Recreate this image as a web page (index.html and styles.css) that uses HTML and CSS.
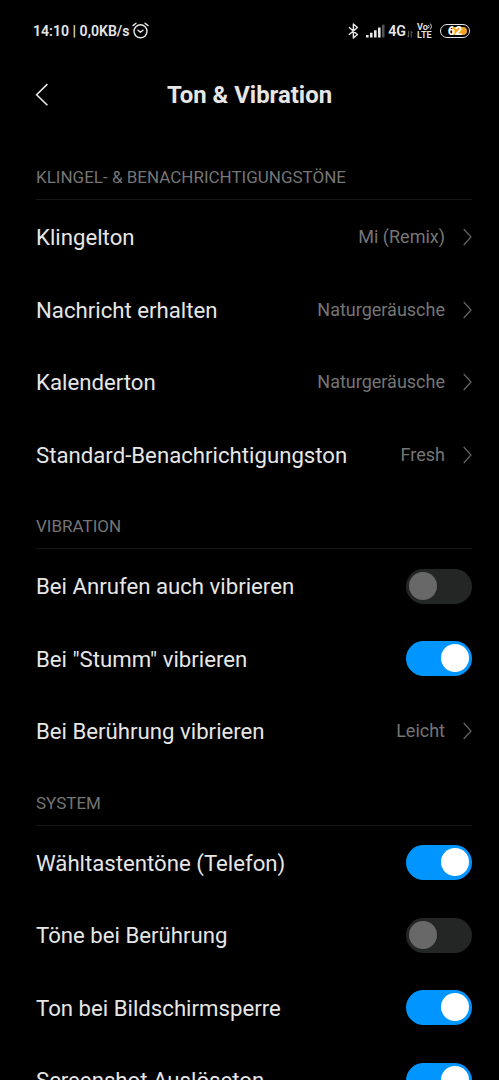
FILE: index.html
```html
<!DOCTYPE html>
<html lang="de">
<head>
<meta charset="utf-8">
<title>Ton &amp; Vibration</title>
<link rel="stylesheet" href="styles.css">
</head>
<body>
<div class="screen">
  <div class="status">
    <span class="status-time">14:10 | 0,0KB/s</span>
    <svg class="alarm" width="17" height="17" viewBox="0 0 17 17" fill="none" stroke="#e6e6e6" stroke-width="1.4" stroke-linecap="round" stroke-linejoin="round"><circle cx="8.5" cy="9.3" r="6.5"/><path d="M1 3.6 4 1.2M16 3.6 13 1.2M6 8.3l2.4 2 2.6-2"/></svg>
    <svg class="bluetooth" width="11" height="16" viewBox="0 0 11 16" fill="none" stroke="#e6e6e6" stroke-width="1.5" stroke-linejoin="round"><path d="M1 4.2 9.4 11.5 5.4 15V1L9.4 4.5 1 11.8"/></svg>
    <svg class="signal" width="19" height="14" viewBox="0 0 19 14" fill="#e6e6e6"><path d="M0 11h2.6v2.5H0zM4 8.7h2.6v4.8H4zM8 6.2h2.6v7.3H8zM12 3.6h2.6v9.9H12z"/><path fill="#555" d="M16 .7h2.5v12.8H16z"/></svg>
    <span class="network">4G</span>
    <svg class="traffic" width="6" height="7" viewBox="0 0 6 7" fill="none" stroke="#777" stroke-width=".8"><path d="M1.6 0v6M.2 4.5l1.4 1.6M4.2 6.5v-6M5.6 2 4.2.4"/></svg>
    <span class="volte"><span class="vo">Vo<svg width="5" height="7" viewBox="0 0 5 7" fill="none" stroke="#e6e6e6" stroke-width=".9"><path d="M.5 1.9q1.1 1.6 0 3.2M2.4.6q2.2 2.9 0 5.8"/></svg></span><span>LTE</span></span>
    <span class="battery"><span class="battery-fill"></span><span class="battery-value">62</span></span>
  </div>
  <header class="bar">
    <svg class="back" width="14" height="24" viewBox="0 0 14 24" fill="none" stroke="#e6e6e6" stroke-width="1.6"><path d="M12.4 1.1 1.6 11.7 12.4 22.3"/></svg>
    <h1>Ton &amp; Vibration</h1>
  </header>
  <main class="list">
    <h2>KLINGEL- &amp; BENACHRICHTIGUNGSTÖNE</h2>
    <div class="row"><span class="label">Klingelton</span><span class="value">Mi (Remix)</span><svg class="chevron" viewBox="0 0 10 18"><path d="M1.7 1 9 9l-7.3 8"/></svg></div>
    <div class="row"><span class="label">Nachricht erhalten</span><span class="value">Naturgeräusche</span><svg class="chevron" viewBox="0 0 10 18"><path d="M1.7 1 9 9l-7.3 8"/></svg></div>
    <div class="row"><span class="label">Kalenderton</span><span class="value">Naturgeräusche</span><svg class="chevron" viewBox="0 0 10 18"><path d="M1.7 1 9 9l-7.3 8"/></svg></div>
    <div class="row"><span class="label">Standard-Benachrichtigungston</span><span class="value">Fresh</span><svg class="chevron" viewBox="0 0 10 18"><path d="M1.7 1 9 9l-7.3 8"/></svg></div>
    <h2>VIBRATION</h2>
    <div class="row"><span class="label">Bei Anrufen auch vibrieren</span><span class="switch"></span></div>
    <div class="row"><span class="label">Bei "Stumm" vibrieren</span><span class="switch on"></span></div>
    <div class="row"><span class="label">Bei Berührung vibrieren</span><span class="value">Leicht</span><svg class="chevron" viewBox="0 0 10 18"><path d="M1.7 1 9 9l-7.3 8"/></svg></div>
    <h2>SYSTEM</h2>
    <div class="row"><span class="label">Wähltastentöne (Telefon)</span><span class="switch on"></span></div>
    <div class="row"><span class="label">Töne bei Berührung</span><span class="switch"></span></div>
    <div class="row"><span class="label">Ton bei Bildschirmsperre</span><span class="switch on"></span></div>
    <div class="row"><span class="label">Screenshot Auslöseton</span><span class="switch on"></span></div>
  </main>
</div>
</body>
</html>
```
FILE: styles.css
```css
* { box-sizing: border-box; }
body { margin: 0; background: #000; font-family: Roboto, sans-serif; color: #e6e6e6; }
.screen { height: 1080px; overflow: hidden; background: #000; }
.status { display: flex; align-items: center; height: 61px; padding: 0 29px 0 33px; }
.status svg, .status > span { flex: none; }
.status-time { padding-top: 1px; font-size: 14.1px; font-weight: 600; white-space: pre; }
.alarm { margin-left: 3px; }
.bluetooth { margin-left: auto; }
.signal { margin-left: 7px; }
.network { margin-left: 3px; padding-top: 1px; font-size: 14.2px; font-weight: 600; }
.traffic { margin: 8px 0 0 1px; }
.volte { display: flex; flex-direction: column; width: 17px; margin-left: 4px; font-size: 9.2px; line-height: 8px; font-weight: 600; }
.vo { display: flex; align-items: center; }
.battery { position: relative; width: 30px; height: 14px; margin-left: 6px; padding: 2px; border: 1.5px solid #e6e6e6; border-radius: 7px; }
.battery-fill { display: block; width: 15px; height: 8px; margin-left: auto; border-radius: 0 4px 4px 0; background: #f5a42a; }
.battery-value { position: absolute; inset: 0; font-size: 12.5px; line-height: 12px; font-weight: 700; text-align: center; color: #fff; }
.bar { display: grid; grid-template-columns: 14px 1fr 14px; align-items: center; height: 68px; padding: 0 35px; }
h1 { margin: 0; font-size: 23.9px; line-height: 28px; font-weight: 700; text-align: center; }
.list { padding: 13px 27px 0 36px; }
h2 { height: 59px; margin: 0; padding-top: 24px; font-size: 17px; line-height: 22px; font-weight: 400; color: #757575; background: linear-gradient(#161616, #161616) 0 57px / 100% 1px no-repeat; }
.row { display: flex; align-items: center; height: 72.5px; }
.label { flex: 1; padding-top: .4px; font-size: 22.2px; line-height: 28px; white-space: nowrap; }
.value { padding-top: .4px; font-size: 18px; line-height: 24px; color: #757575; }
.chevron { width: 10px; height: 18px; margin-left: 17px; fill: none; stroke: #666; stroke-width: 1.2; }
.switch { width: 66px; height: 35px; padding: 3px; border-radius: 18px; background: #242625; }
.switch::before { content: ""; display: block; width: 28px; height: 28px; border-radius: 50%; background: #686868; }
.switch.on { background: #0095ff; }
.switch.on::before { margin-left: auto; background: #fff; }
```
